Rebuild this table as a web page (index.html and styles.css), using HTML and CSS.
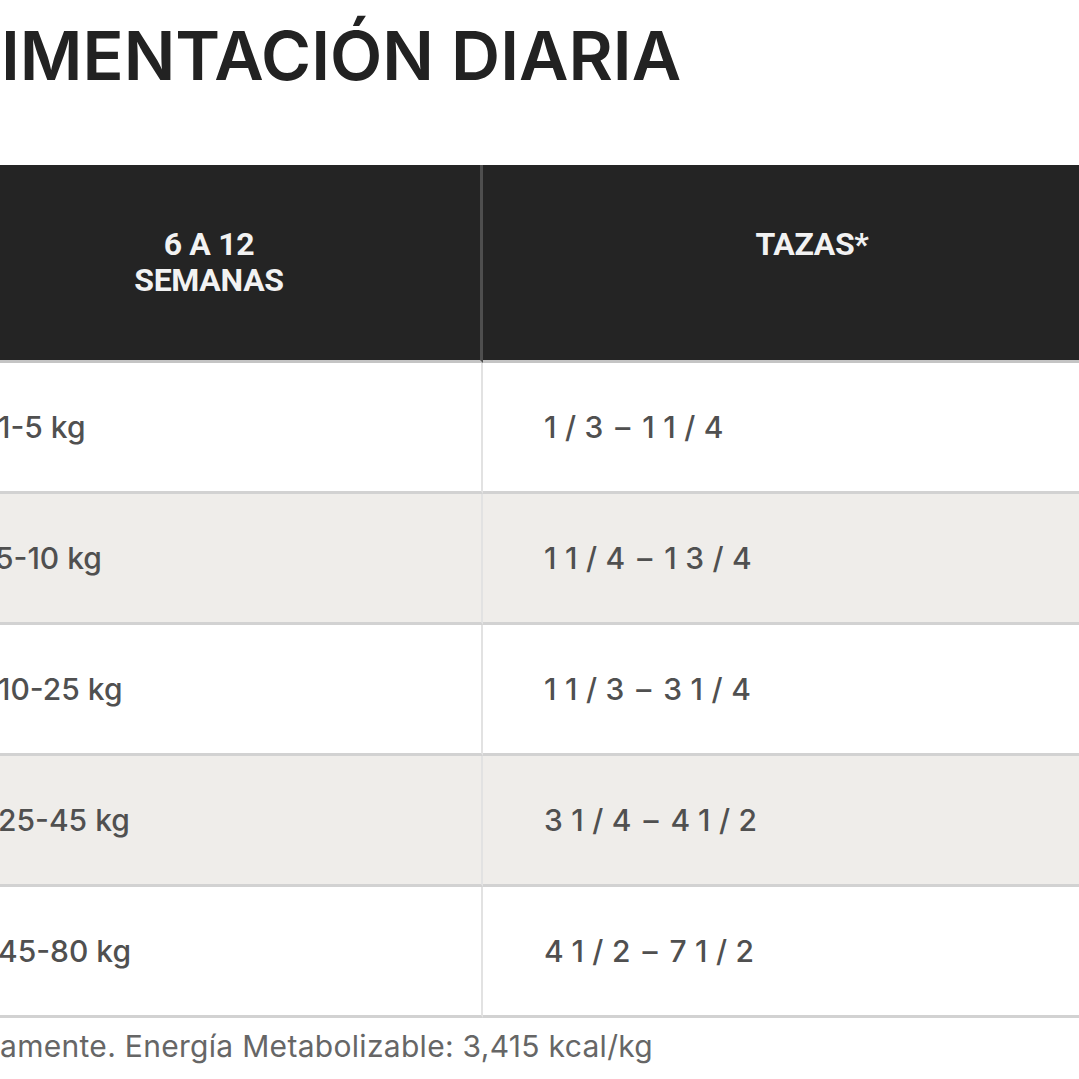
FILE: index.html
```html
<!DOCTYPE html>
<html lang="es">
<head>
<meta charset="utf-8">
<title>Alimentación diaria</title>
<link rel="stylesheet" href="styles.css">
</head>
<body>
<div class="page">
  <h1 class="title">IMENTACIÓN DIARIA</h1>
  <div class="table">
    <div class="cell head first">6 A 12<br>SEMANAS</div>
    <div class="cell head">TAZAS*</div>

    <div class="cell first">1-5 kg</div>
    <div class="cell qty">1/3 – 11/4</div>

    <div class="cell first alt shift">5-10 kg</div>
    <div class="cell qty alt">11/4 – 13/4</div>

    <div class="cell first">10-25 kg</div>
    <div class="cell qty">11/3 – 31/4</div>

    <div class="cell first alt">25-45 kg</div>
    <div class="cell qty alt">31/4 – 41/2</div>

    <div class="cell first">45-80 kg</div>
    <div class="cell qty">41/2 – 71/2</div>
  </div>
  <p class="note">amente. Energía Metabolizable: 3,415 kcal/kg</p>
</div>
</body>
</html>
```

FILE: styles.css
```css
html, body {
  margin: 0;
  padding: 0;
  background: #ffffff;
  overflow: hidden;
}

.page {
  width: 1203px;
  margin-left: -62px;
  font-family: Inter, "Noto Sans", sans-serif;
}

.title {
  margin: 21px 0 0 0;
  padding-left: 63px;
  font-size: 68px;
  line-height: 69px;
  font-weight: 600;
  color: #222222;
  letter-spacing: 0;
}

.table {
  margin-top: 75px;
  display: grid;
  grid-template-columns: 545px 1fr;
}

.cell {
  box-sizing: border-box;
  height: 131px;
  display: flex;
  align-items: center;
  font-size: 30px;
  font-weight: 500;
  color: #505050;
  background: #ffffff;
  border-bottom: 3px solid #d2d2d2;
}

.cell.first {
  padding-left: 60px;
  border-right: 2px solid #e2e2e2;
}

.cell.shift {
  padding-left: 57px;
}

.cell.qty {
  padding-left: 61px;
  letter-spacing: 8.5px;
  word-spacing: -13px;
}

.cell.alt {
  background: #efedea;
}

.cell.head {
  height: 198px;
  align-items: flex-start;
  justify-content: center;
  text-align: center;
  padding-top: 61px;
  background: #242424;
  color: #f2f2f2;
  font-family: Roboto, "Liberation Sans", sans-serif;
  font-weight: 700;
  font-size: 32px;
  line-height: 36px;
  letter-spacing: -0.3px;
  border-bottom: 3px solid #c4c4c4;
}

.cell.head.first {
  border-right: 3px solid #4e4e4e;
  padding-left: 0;
}

.note {
  margin: 7px 0 0 0;
  padding-left: 62px;
  font-size: 30px;
  line-height: 42px;
  letter-spacing: 0.3px;
  color: #666666;
}
```
